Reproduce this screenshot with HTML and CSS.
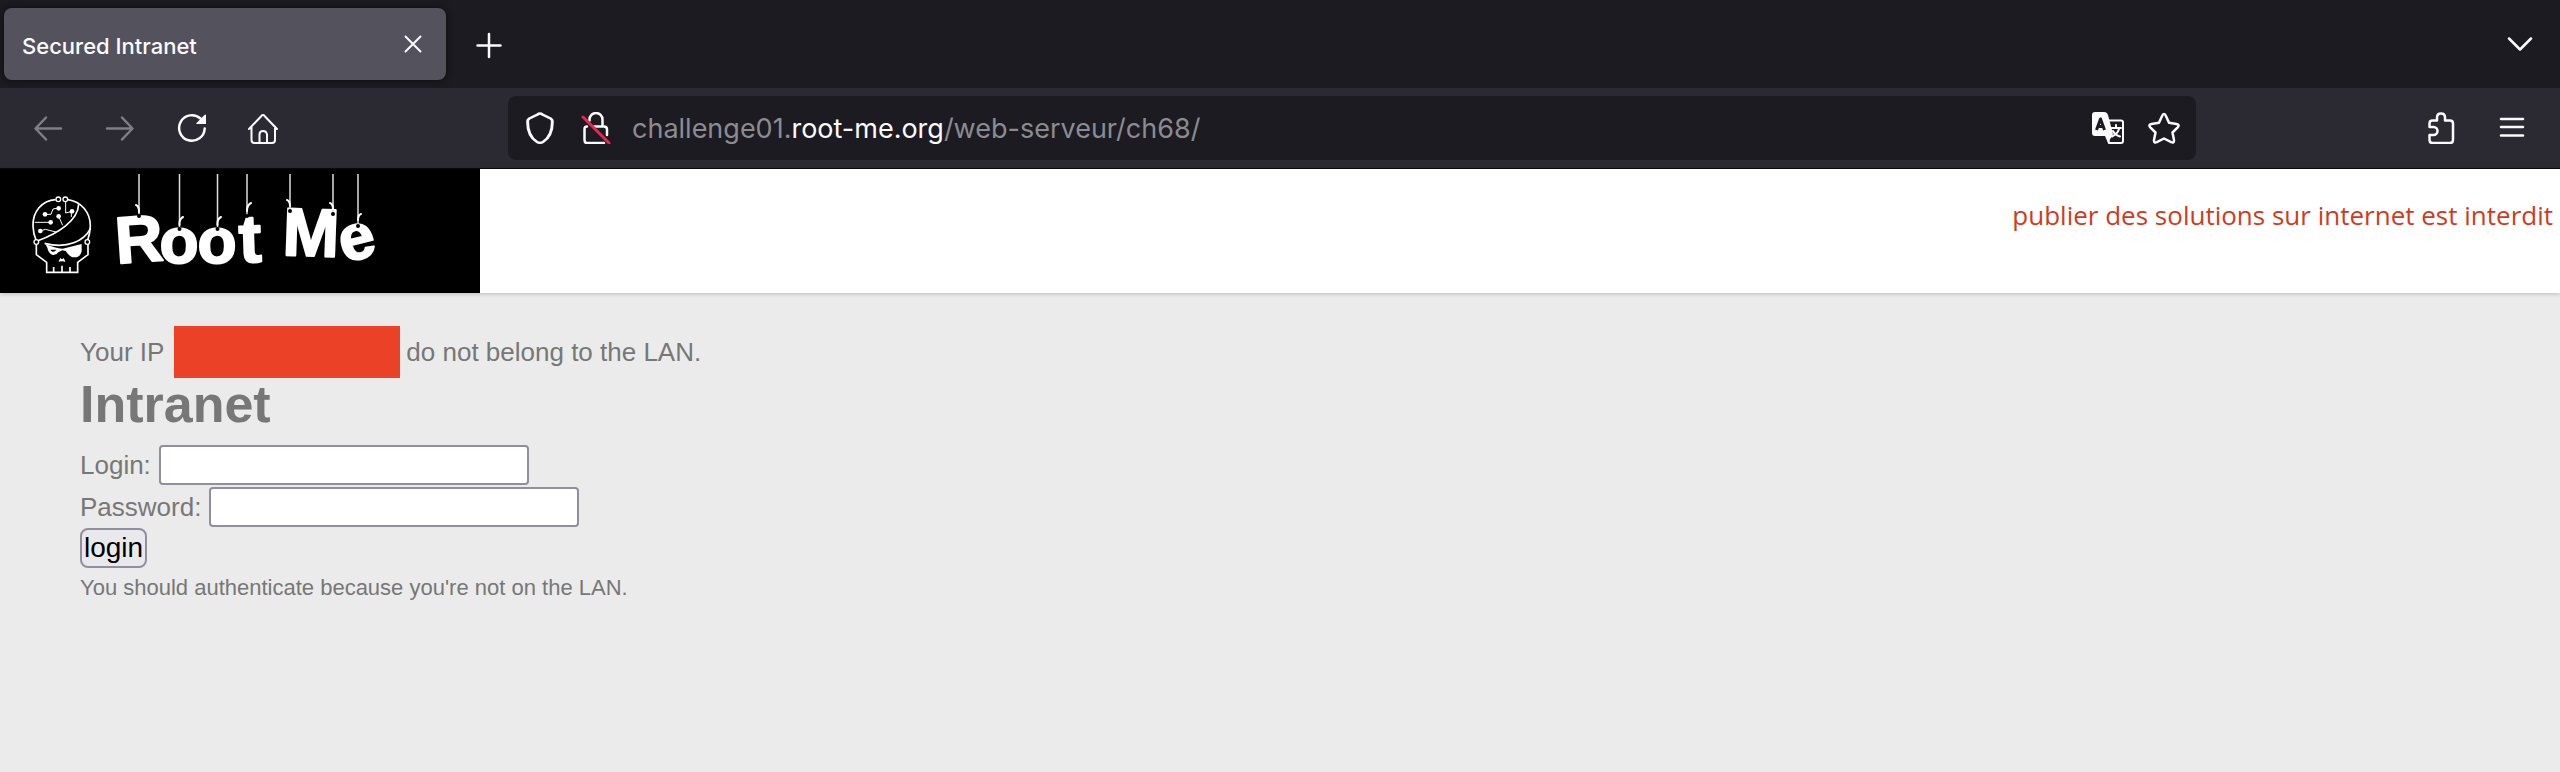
FILE: index.html
```html
<!DOCTYPE html>
<html lang="fr">
<head>
<meta charset="utf-8">
<title>Secured Intranet</title>
<link rel="stylesheet" href="styles.css">
</head>
<body>
<header class="browser">
  <div class="tabs">
    <div class="tab">
      <span class="tab-title">Secured Intranet</span>
      <button class="icon-button" type="button" aria-label="Close tab">
        <svg class="icon" viewBox="0 0 32 32"><path d="M8.500 8.500 23.500 23.500M23.500 8.500 8.500 23.500"/></svg>
      </button>
    </div>
    <button class="icon-button" type="button" aria-label="New tab">
      <svg class="icon" viewBox="0 0 32 32"><path class="heavy" d="M16 6V29M4.500 17.500H27.500"/></svg>
    </button>
    <button class="icon-button all-tabs" type="button" aria-label="List all tabs">
      <svg class="icon" viewBox="0 0 32 32"><path class="heavy" d="M5 10.500 16 21.500 27 10.500"/></svg>
    </button>
  </div>
  <nav class="toolbar">
    <button class="icon-button" type="button" aria-label="Back" disabled>
      <svg class="icon" viewBox="0 0 32 32"><path class="heavy" d="M29 16.500H4M14 5.500 3.500 16.500 14 27.500"/></svg>
    </button>
    <button class="icon-button" type="button" aria-label="Forward" disabled>
      <svg class="icon" viewBox="0 0 32 32"><path class="heavy" d="M3 16.500H28M18 5.500 28.500 16.500 18 27.500"/></svg>
    </button>
    <button class="icon-button" type="button" aria-label="Reload">
      <svg class="icon" viewBox="0 0 32 32"><path class="heavy" d="M28.700 16.500A12.800 12.800 0 1 1 24.500 6.500"/><path class="solid" d="M30 3V12H21Q19.500 12 20.500 11L28.500 3Q30 2 30 3Z"/></svg>
    </button>
    <button class="icon-button" type="button" aria-label="Home">
      <svg class="icon" viewBox="0 0 32 32"><path d="M1 17 13.200 4.200Q15 2 16.800 4.200L29 17M3.500 14.500V28Q3.500 31 6.500 31H24Q27 31 27 28V14.500M11.500 31V22.500Q11.500 19 15 19T19 22.500V31"/></svg>
    </button>
    <div class="address">
      <svg class="icon" viewBox="0 0 32 32"><path class="heavy" d="M16 1.500Q17 1.500 18 2.500L25 6.500Q26.500 7.500 26.500 9.500C26.500 20 24 26 18.500 30Q16 31.500 13.500 30C8 26 5.500 20 5.500 9.500Q5.500 7.500 7 6.500L14 2.500Q15 1.500 16 1.500Z" transform="translate(-2.900) scale(1.180 1)"/></svg>
      <svg class="icon" viewBox="0 0 32 32"><path class="heavy" d="M9.500 8.500V7.500A6.500 6.500 0 0 1 22.500 7.500V14M14 14.500H24Q27 14.500 27 17.500V23M7 14.500Q4.500 14.500 4.500 17V28Q4.500 31 7 31H24"/><path class="slash" d="M3 5 29 31"/></svg>
      <div class="url">challenge01.<span class="domain">root-me.org</span>/web-serveur/ch68/</div>
      <button class="icon-button" type="button" aria-label="Translate page">
        <svg class="icon" viewBox="0 0 32 32"><path d="M16 8.500H29Q31 8.500 31 10.500V29Q31 31 29 31H17L16 25"/><path class="solid" d="M3 0H12Q15 0 16 3L21 22 16 31 13 24H3Q0 24 0 21V3Q0 0 3 0Z"/><path class="letter" d="M4.500 18 8.500 7 12.500 18M6 14.500H11"/><path d="M19 16H29M24 13V16M27 17Q25.500 22 20 24.500M21 19Q23 23 28 24.500"/></svg>
      </button>
      <button class="icon-button" type="button" aria-label="Bookmark this page">
        <svg class="icon" viewBox="0 0 32 32"><path class="heavy" d="M14.300 3.500Q16 .500 17.700 3.500L21 10.800 28.500 12Q32 12.800 29.700 15.300L24.500 20.500 26 28Q26.200 31.300 23.200 30.200L16 26.500 8.800 30.200Q5.800 31.300 6 28L7.500 20.500 2.300 15.300Q0 12.800 3.500 12L11 10.800Z"/></svg>
      </button>
    </div>
    <button class="icon-button" type="button" aria-label="Extensions">
      <svg class="icon" viewBox="0 0 32 32"><path class="heavy" d="M5.500 15V11.500Q5.500 8.500 8.500 8.500H13V5.500Q13 1.500 17 1.500T21 5.500V8.500H26Q29 8.500 29 11.500V28Q29 31 26 31H8.500Q5.500 31 5.500 28V23H9.500A4 4 0 0 0 9.500 15Z"/></svg>
    </button>
    <button class="icon-button" type="button" aria-label="Open menu">
      <svg class="icon" viewBox="0 0 32 32"><path class="heavy" d="M5 7H27M5 15H27M5 23.500H27"/></svg>
    </button>
  </nav>
</header>

<div class="banner">
  <a class="logo" href="#" aria-label="Root Me">
    <svg class="logo-art" viewBox="0 0 480 124">
      <g class="skull" transform="translate(20 21) scale(.3333)">
        <path d="M107 29C65 32 38 65 39 108Q40 132 48 150M143 29C185 35 211 68 211 108Q210 132 203 150"/>
        <path d="M176 43C174 92 115 130 52 153M212 115C192 153 142 178 74 160"/>
        <path d="M49 162V194L80 217V247H173V217L204 194V162"/>
        <path d="M101 247V231M126 247V227M150 247V231"/>
        <path class="thin" d="M75 73H93L99 57 116 54M44 97H92M116 79 128 106M61 123 76 118 108 126M137 35V69L154 65V81"/>
        <g class="nodes"><circle cx="75" cy="73" r="7"/><circle cx="116" cy="55" r="7"/><circle cx="92" cy="97" r="7"/><circle cx="116" cy="79" r="7"/><circle cx="61" cy="123" r="7"/><circle cx="156" cy="64" r="7"/></g>
        <g class="rings"><circle cx="115" cy="28" r="7"/><circle cx="136" cy="28" r="7"/><circle cx="49" cy="156" r="7"/><circle cx="202" cy="156" r="7"/></g>
        <path class="fill" d="M76 162Q105 174 128 176L185 162V184Q181 200 170 202H157Q147 198 137 183L127 181 115 187Q110 196 98 195 85 190 82 173Z"/>
        <path class="socket" d="M91 179H109Q105 186 98 185Q93 184 91 179Z"/>
        <path class="nose" d="M118 215 122 208 126 212 130 208 134 215"/>
      </g>
      <g class="letters">
        <text class="cap" x="139" y="93" transform="rotate(-4 139 70)">R</text>
        <text x="179" y="94">o</text>
        <text x="217" y="94">o</text>
        <text class="tall" x="250" y="93" transform="rotate(-2 250 70)">t</text>
        <text class="cap-wide" x="311" y="87" transform="rotate(2 311 64)">M</text>
        <text x="357" y="90" transform="rotate(-14 357 72)">e</text>
      </g>
      <path class="strings" d="M139 5V46M179.500 5V58M217.500 5V58M247 5V46M290 5V41M333 5V44M358 5V56"/>
      <path class="knots" d="M139 43Q139 37 136 36M179.500 56Q179 50 183 48M217.500 56Q217 50 221 48M247 42Q247 36 251 34M290 37Q290 32 287 31M333 40Q333 35 330 34M358 51Q358 46 361 45"/>
      <g class="holes"><circle cx="139" cy="47" r="2"/><circle cx="179.500" cy="60" r="2"/><circle cx="217.500" cy="60" r="2"/><circle cx="247" cy="47" r="2"/><circle cx="290" cy="42" r="2"/><circle cx="333" cy="45" r="2"/><circle cx="358" cy="57" r="2"/></g>
    </svg>
  </a>
  <p class="warning">publier des solutions sur internet est interdit</p>
</div>

<main class="content">
  <p class="message">Your IP <span class="redacted"></span> do not belong to the LAN.</p>
  <h1 class="title">Intranet</h1>
  <form class="login-form">
    <div class="field"><label for="login">Login:</label><input class="text-box" id="login" type="text"></div>
    <div class="field"><label for="password">Password:</label><input class="text-box" id="password" type="password"></div>
    <button class="submit" type="submit">login</button>
  </form>
  <p class="hint">You should authenticate because you're not on the LAN.</p>
</main>
</body>
</html>
```
FILE: styles.css
```css
* {
  box-sizing: border-box;
}

body {
  margin: 0;
  background: #ebebeb;
  color: #777;
  font: 26px/42px "Liberation Sans", Arial, sans-serif;
}

p,
h1 {
  margin: 0;
}

/* Browser frame */
.browser {
  background: #2b2a33;
  border-bottom: 1px solid #0c0c0d;
  color: #fbfbfe;
  font-family: Inter, sans-serif;
}

.tabs {
  display: flex;
  align-items: center;
  height: 88px;
  padding: 0 24px 0 4px;
  background: #1c1b22;
}

.tab {
  display: flex;
  align-items: center;
  justify-content: space-between;
  width: 442px;
  height: 72px;
  margin-right: 27px;
  padding: 0 17px 0 18px;
  border-radius: 8px;
  background: #54525d;
  box-shadow: 0 0 6px #0c0c0d;
}

.tab-title {
  padding-top: 3px;
  font-size: 22px;
  font-weight: 500;
}

.all-tabs {
  margin-left: auto;
}

.toolbar {
  display: flex;
  align-items: center;
  gap: 40px;
  height: 80px;
  padding: 0 32px;
}

.icon-button {
  display: flex;
  padding: 0;
  border: 0;
  background: none;
  color: inherit;
}

.icon-button:disabled {
  color: #7f7e84;
}

.icon {
  flex: none;
  width: 32px;
  height: 32px;
  fill: none;
  stroke: currentColor;
  stroke-width: 2;
  stroke-linecap: round;
  stroke-linejoin: round;
}

.icon .heavy {
  stroke-width: 2.5;
}

.icon .solid {
  fill: currentColor;
  stroke: none;
}

.icon .letter {
  stroke: #1c1b22;
  stroke-width: 3;
  stroke-linecap: butt;
}

.icon .slash {
  stroke: #e22850;
  stroke-width: 3;
}

.address {
  display: flex;
  flex: 1;
  align-items: center;
  gap: 24px;
  min-width: 0;
  height: 64px;
  margin: 0 188px;
  padding: 0 16px;
  border-radius: 8px;
  background: #1c1b22;
}

.url {
  flex: 1;
  margin-left: -4px;
  padding-top: 2px;
  overflow: hidden;
  color: #8c8b91;
  font-size: 27px;
  white-space: nowrap;
}

.domain {
  color: #fbfbfe;
}

/* Site banner */
.banner {
  display: flex;
  justify-content: space-between;
  background: #fff;
  box-shadow: 0 1px 4px rgba(0, 0, 0, 0.2);
}

.logo {
  display: flex;
  width: 480px;
  background: #000;
}

.logo-art {
  width: 100%;
}

.warning {
  padding: 25px 7px 0 0;
  color: #ce3c20;
  font-family: "Open Sans", sans-serif;
}

.skull {
  fill: none;
  stroke: #fff;
  stroke-width: 5;
}

.skull .thin {
  stroke-width: 3;
}

.skull .nodes,
.skull .fill {
  fill: #fff;
  stroke: none;
}

.skull .rings {
  fill: #000;
  stroke-width: 4;
}

.skull .socket {
  fill: #000;
  stroke: none;
}

.letters {
  fill: #fff;
  stroke: #fff;
  stroke-width: 2;
  stroke-linejoin: round;
  font-size: 64px;
  font-weight: 700;
  text-anchor: middle;
}

.letters .cap {
  font-size: 66px;
}

.letters .tall,
.letters .cap-wide {
  font-size: 68px;
}

.strings {
  stroke: #ddd;
  stroke-width: 1.5;
}

.knots {
  fill: none;
  stroke: #fff;
  stroke-width: 2;
  stroke-linecap: round;
}

.holes {
  fill: #000;
}

/* Page */
.content {
  padding: 33px 80px;
}

.message {
  display: flex;
  align-items: center;
  gap: 6px;
  height: 52px;
  line-height: 40px;
}

.redacted {
  width: 226px;
  height: 52px;
  margin-left: 4px;
  background: #eb4127;
}

.title {
  font-size: 52px;
  line-height: 52px;
}

.login-form {
  padding-top: 14px;
}

.field {
  display: flex;
  align-items: center;
  gap: 8px;
  height: 42px;
}

.text-box {
  width: 370px;
  height: 40px;
  padding: 2px 4px;
  border: 2px solid #8f8f9d;
  border-radius: 4px;
  background: #fff;
  font: inherit;
}

.submit {
  display: block;
  height: 40px;
  padding: 0 2px;
  border: 2px solid #8f8f9d;
  border-radius: 8px;
  background: #e9e9ed;
  color: #000;
  font: inherit;
  font-size: 28px;
  line-height: 36px;
}

.hint {
  font-size: 22px;
  line-height: 40px;
}
```
